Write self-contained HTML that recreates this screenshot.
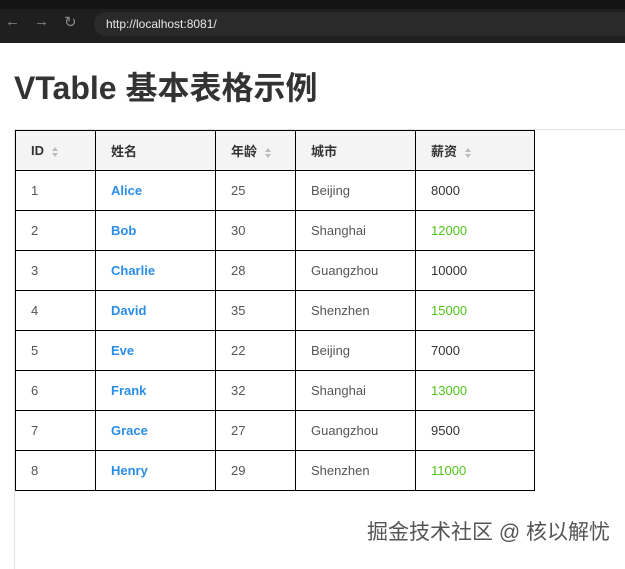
<!DOCTYPE html>
<html><head><meta charset="utf-8"><style>
*{margin:0;padding:0;box-sizing:border-box}
body{width:625px;height:559px;overflow:hidden;background:#fff;font-family:"Liberation Sans","Noto Sans CJK SC",sans-serif;position:relative}
.top{position:absolute;left:0;top:0;width:625px;height:43px;background:#1f1f1f}
.tabs{position:absolute;left:0;top:0;width:625px;height:9px;background:#141414}
.url{position:absolute;left:94px;top:12px;width:531px;height:24px;border-radius:12px 0 0 12px;background:#2a2a2a;color:#e8e8e8;font-size:12px;line-height:24px;padding-left:12px}
.nav{position:absolute;top:13px;color:#8a8a8a;font-size:15px}
h1{position:absolute;left:14px;top:68px;font-size:32px;font-weight:bold;color:#333;line-height:40px}
.box{position:absolute;left:14px;top:129px;width:620px;height:440px;border-top:1px solid #e4e4e4;border-left:1px solid #e4e4e4}
table{position:absolute;left:15px;top:130px;border-collapse:collapse}
td,th{border:1px solid #000;height:40px;font-size:13px;color:#555;text-align:left;padding-left:15px;font-weight:normal}
th{background:#f4f4f4;color:#333;font-weight:bold}
.n{color:#2a8ee6;font-weight:bold}
.g{color:#52c41a}
.s{display:inline-block;margin-left:8px;vertical-align:middle;width:6px;height:10px;position:relative}
.s:before,.s:after{content:"";position:absolute;left:0;border-left:3px solid transparent;border-right:3px solid transparent}
.s:before{top:0;border-bottom:4px solid #bbb}
.s:after{bottom:0;border-top:4px solid #bbb}
.wm{position:absolute;left:367px;top:516px;font-size:21px;color:#555;text-shadow:0 0 2px #fff,0 0 2px #fff}
</style></head><body>
<div class="top"><div class="tabs"></div>
<span class="nav" style="left:5px">←</span><span class="nav" style="left:34px">→</span><span class="nav" style="left:64px">↻</span>
<div class="url">http://localhost:8081/</div></div>
<h1>VTable 基本表格示例</h1>
<div class="box"></div>
<table>
<tr><th style="width:80px">ID<span class="s"></span></th><th style="width:120px">姓名</th><th style="width:80px">年龄<span class="s"></span></th><th style="width:120px">城市</th><th style="width:119px">薪资<span class="s"></span></th></tr>
<tr><td>1</td><td class="n">Alice</td><td>25</td><td>Beijing</td><td style="color:#333">8000</td></tr>
<tr><td>2</td><td class="n">Bob</td><td>30</td><td>Shanghai</td><td class="g">12000</td></tr>
<tr><td>3</td><td class="n">Charlie</td><td>28</td><td>Guangzhou</td><td style="color:#333">10000</td></tr>
<tr><td>4</td><td class="n">David</td><td>35</td><td>Shenzhen</td><td class="g">15000</td></tr>
<tr><td>5</td><td class="n">Eve</td><td>22</td><td>Beijing</td><td style="color:#333">7000</td></tr>
<tr><td>6</td><td class="n">Frank</td><td>32</td><td>Shanghai</td><td class="g">13000</td></tr>
<tr><td>7</td><td class="n">Grace</td><td>27</td><td>Guangzhou</td><td style="color:#333">9500</td></tr>
<tr><td>8</td><td class="n">Henry</td><td>29</td><td>Shenzhen</td><td class="g">11000</td></tr>
</table>
<div class="wm">掘金技术社区 @ 核以解忧</div>
</body></html>
